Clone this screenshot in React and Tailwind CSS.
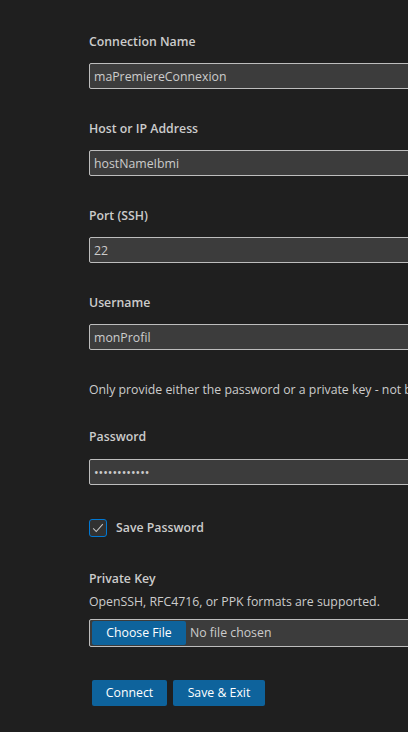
import { useState } from 'react';

const Field = ({ label, value, type = 'text' }) => (
  <div className="mb-[31px]">
    <label className="block text-[12.3px] leading-[18px] font-semibold text-[#cccccc]">{label}</label>
    <input
      type={type}
      defaultValue={value}
      className="mt-[12px] block w-[420px] h-[26px] px-[4px] bg-[#3c3c3c] border border-[#bdbdbd] rounded-[2px] text-[12.3px] text-[#cccccc] outline-none"
    />
  </div>
);

export default function App() {
  const [savePw, setSavePw] = useState(true);

  return (
    <div
      className="w-[408px] h-[732px] overflow-hidden bg-[#1f1f1f] text-[#cccccc] pl-[89px] pt-[33px]"
      style={{ fontFamily: '"Open Sans", "Noto Sans", sans-serif' }}
    >
      <Field label="Connection Name" value="maPremiereConnexion" />
      <Field label="Host or IP Address" value="hostNameIbmi" />
      <Field label="Port (SSH)" value="22" />
      <Field label="Username" value="monProfil" />

      <p className="text-[12.3px] leading-[18px] whitespace-nowrap">
        Only provide either the password or a private key - not both.
      </p>

      <div className="mt-[29px]">
        <label className="block text-[12.3px] leading-[18px] font-semibold">Password</label>
        <input
          type="password"
          defaultValue="monMotDePass"
          className="mt-[13px] block w-[420px] h-[26px] px-[4px] bg-[#3c3c3c] border border-[#bdbdbd] rounded-[2px] text-[12.3px] text-[#cccccc] outline-none"
        />
      </div>

      {/* Save password checkbox */}
      <label className="mt-[34px] flex items-center gap-[9px] cursor-pointer" onClick={() => setSavePw(!savePw)}>
        <span className="w-[18px] h-[18px] flex items-center justify-center bg-[#313131] border border-[#0078d4] rounded-[3px]">
          {savePw && (
            <svg width="14" height="14" viewBox="0 0 16 16" fill="none">
              <path d="M2.5 8.5 L6 12 L13.5 3.5" stroke="#c5c5c5" strokeWidth="1.2" />
            </svg>
          )}
        </span>
        <span className="text-[12.3px] leading-[18px] font-semibold">Save Password</span>
      </label>

      <div className="mt-[33px]">
        <label className="block text-[12.3px] leading-[18px] font-semibold">Private Key</label>
        <p className="mt-[5px] text-[12.3px] leading-[18px]">OpenSSH, RFC4716, or PPK formats are supported.</p>
        <div className="mt-[8px] w-[420px] h-[28px] flex items-center bg-[#3c3c3c] border border-[#bdbdbd] rounded-[2px] pl-[2px]">
          <button className="h-[24px] w-[94px] bg-[#0e639c] text-white text-[12.3px] rounded-[2px]">Choose File</button>
          <span className="ml-[4px] text-[12.3px] text-[#cccccc]">No file chosen</span>
        </div>
      </div>

      <div className="mt-[33px] ml-[3px] flex gap-[6px]">
        <button className="h-[26px] w-[75px] bg-[#0e639c] text-white text-[12.3px] rounded-[2px]">Connect</button>
        <button className="h-[26px] w-[92px] bg-[#0e639c] text-white text-[12.3px] rounded-[2px]">Save &amp; Exit</button>
      </div>
    </div>
  );
}
